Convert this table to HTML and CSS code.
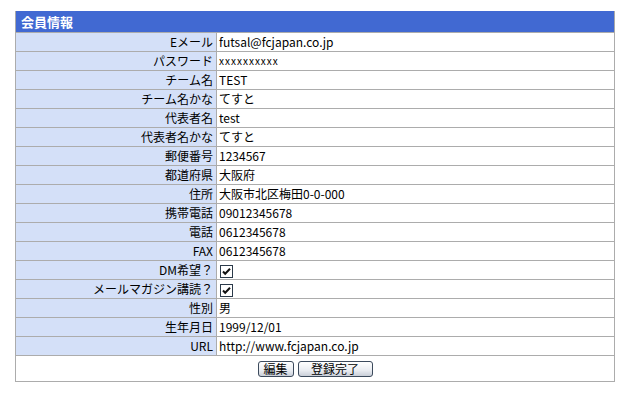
FILE: index.html
```html
<!DOCTYPE html>
<html lang="ja">
<head>
<meta charset="utf-8">
<title>会員情報</title>
<link rel="stylesheet" href="styles.css">
</head>
<body>
<div class="page">
<table class="info">
  <thead>
    <tr><th colspan="2" class="head">会員情報</th></tr>
  </thead>
  <tbody>
    <tr><td class="lbl">Eメール</td><td class="val">futsal@fcjapan.co.jp</td></tr>
    <tr><td class="lbl">パスワード</td><td class="val small">xxxxxxxxxx</td></tr>
    <tr><td class="lbl">チーム名</td><td class="val">TEST</td></tr>
    <tr><td class="lbl">チーム名かな</td><td class="val">てすと</td></tr>
    <tr><td class="lbl">代表者名</td><td class="val">test</td></tr>
    <tr><td class="lbl">代表者名かな</td><td class="val">てすと</td></tr>
    <tr><td class="lbl">郵便番号</td><td class="val">1234567</td></tr>
    <tr><td class="lbl">都道府県</td><td class="val">大阪府</td></tr>
    <tr><td class="lbl">住所</td><td class="val">大阪市北区梅田0-0-000</td></tr>
    <tr><td class="lbl">携帯電話</td><td class="val">09012345678</td></tr>
    <tr><td class="lbl">電話</td><td class="val">0612345678</td></tr>
    <tr><td class="lbl">FAX</td><td class="val">0612345678</td></tr>
    <tr><td class="lbl">DM希望？</td><td class="val"><span class="chk"><svg width="13" height="13" viewBox="0 0 13 13"><rect x="0.5" y="0.5" width="12" height="12" fill="#fff" stroke="#2b3a4a"/><path d="M3 6.5 L5.2 8.8 L10 3.8" fill="none" stroke="#111" stroke-width="2"/></svg></span></td></tr>
    <tr><td class="lbl">メールマガジン講読？</td><td class="val"><span class="chk"><svg width="13" height="13" viewBox="0 0 13 13"><rect x="0.5" y="0.5" width="12" height="12" fill="#fff" stroke="#2b3a4a"/><path d="M3 6.5 L5.2 8.8 L10 3.8" fill="none" stroke="#111" stroke-width="2"/></svg></span></td></tr>
    <tr><td class="lbl">性別</td><td class="val">男</td></tr>
    <tr><td class="lbl">生年月日</td><td class="val">1999/12/01</td></tr>
    <tr><td class="lbl">URL</td><td class="val">http://www.fcjapan.co.jp</td></tr>
    <tr><td colspan="2" class="actions"><button class="btn btn-edit" type="button">編集</button><button class="btn btn-done" type="button">登録完了</button></td></tr>
  </tbody>
</table>
</div>
</body>
</html>
```

FILE: styles.css
```css
html, body {
  margin: 0;
  padding: 0;
  background: #ffffff;
}
.page {
  padding: 11px 0 0 15px;
}
.info {
  border-collapse: collapse;
  width: 600px;
  font-family: "Noto Sans CJK JP", "DejaVu Sans", sans-serif;
  font-size: 12px;
  color: #000;
  border: 1px solid #a9a9a9;
  border-top: none;
}
.head {
  background: #4169d2;
  color: #ffffff;
  font-weight: bold;
  font-size: 13px;
  text-align: left;
  padding: 0 0 0 5px;
  height: 21px;
  line-height: 21px;
  border: none;
}
.info td {
  border: 1px solid #acacac;
  height: 18px;
  line-height: 16px;
  padding: 0;
  white-space: nowrap;
}
.lbl {
  width: 197px;
  background: #d4e0f8;
  text-align: right;
  padding-right: 3px !important;
}
.val {
  background: #ffffff;
  padding-left: 2px !important;
}
.small {
  font-size: 10px;
  letter-spacing: 1px;
}
.chk {
  display: inline-flex;
  vertical-align: middle;
  margin-left: 1px;
}
.chk svg {
  display: block;
}
.actions {
  text-align: center;
  height: 25px !important;
  background: #fff;
}
.btn {
  font-family: "Noto Sans CJK JP", sans-serif;
  font-size: 12px;
  height: 16px;
  line-height: 12px;
  padding: 0;
  margin: 0 2px;
  border: 1px solid #3c4a5c;
  border-radius: 3px;
  background: linear-gradient(#ffffff, #e9ecf1 60%, #c9ced8);
  color: #000;
  vertical-align: middle;
}
.btn-edit {
  width: 36px;
}
.btn-done {
  width: 75px;
}
```
